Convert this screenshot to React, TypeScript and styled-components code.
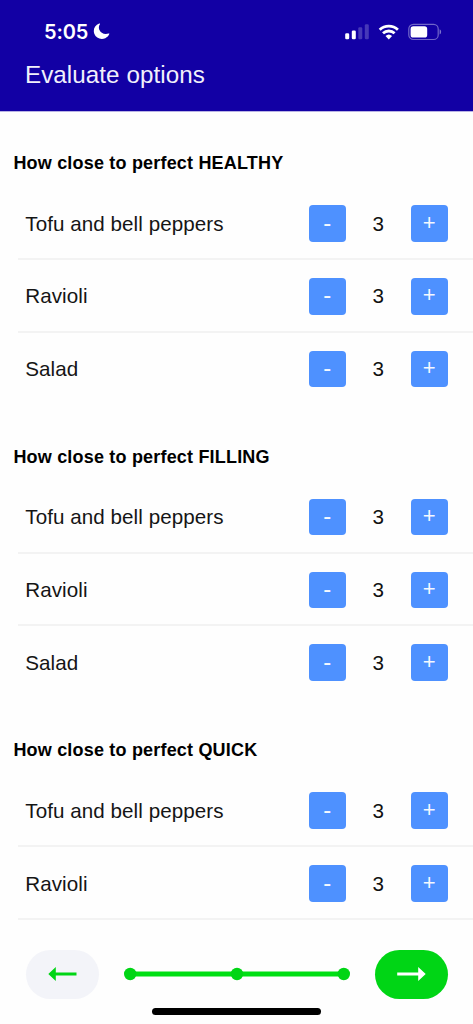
import React, { useState } from "react";
import styled, { createGlobalStyle } from "styled-components";

const GlobalStyle = createGlobalStyle`
  * { box-sizing: border-box; }
  body {
    margin: 0;
    overflow: hidden;
    background: #fff;
    font-family: "Liberation Sans", Arial, sans-serif;
  }
`;

const Screen = styled.div`
  display: flex;
  flex-direction: column;
  height: 1024px;
  background: #fefefe;
  overflow: hidden;
`;

const Header = styled.header`
  flex: none;
  height: 112px;
  background: #1200a4;
  border-bottom: 1px solid #b8b2e4;
  color: #fff;
`;

const StatusBar = styled.div`
  display: flex;
  align-items: center;
  justify-content: space-between;
  height: 57px;
  padding: 6px 31px 0 44px;
`;

const Clock = styled.div`
  display: flex;
  align-items: center;
  gap: 5px;
  font: 600 20px/24px Inter, sans-serif;
  letter-spacing: -0.1px;
`;

const Indicators = styled.div`
  display: flex;
  align-items: center;
  gap: 8px;
`;

const Title = styled.h1`
  margin: 4px 0 0 25px;
  font-size: 24.2px;
  line-height: 28px;
  font-weight: 400;
  letter-spacing: 0.06px;
  color: #f1f0fb;
`;

const Content = styled.main`
  flex: none;
  height: 808px;
  overflow: hidden;
`;

const SectionTitle = styled.h2`
  display: flex;
  align-items: flex-end;
  height: 75.2px;
  margin: 0;
  padding: 0 0 13.2px 13.4px;
  font-size: 18px;
  line-height: 22px;
  font-weight: 700;
  letter-spacing: 0.19px;
  color: #000;
`;

const Row = styled.div`
  display: flex;
  align-items: center;
  height: 72.8px;
  padding: 0 25.5px 0 25.3px;
`;

const Divider = styled.div<{ $visible: boolean }>`
  height: 2px;
  margin: -2px 0 0 18px;
  background: ${(p) => (p.$visible ? "#f3f3f3" : "transparent")};
`;

const OptionName = styled.span`
  flex: 1;
  font-size: 20.6px;
  line-height: 24px;
  letter-spacing: 0.06px;
  color: #151515;
`;

const StepButton = styled.button<{ $size?: number }>`
  display: flex;
  align-items: center;
  justify-content: center;
  width: 36.6px;
  height: 36.6px;
  padding: 0 0 2px;
  border: 0;
  border-radius: 4px;
  background: #4e91ff;
  color: #f4f8ff;
  font: 400 ${(p) => p.$size ?? 22}px/24px "Liberation Sans", Arial, sans-serif;
`;

const Score = styled.span`
  width: 65.4px;
  text-align: center;
  font-size: 20.6px;
  line-height: 24px;
  color: #111;
`;

const Footer = styled.footer`
  flex: none;
  display: flex;
  flex-direction: column;
  align-items: center;
  height: 104px;
  padding: 30px 25.5px 0;
`;

const Navigation = styled.nav`
  display: flex;
  align-items: center;
  justify-content: space-between;
  width: 100%;
`;

const PillButton = styled.button<{ $primary?: boolean }>`
  display: flex;
  align-items: center;
  justify-content: center;
  width: 73px;
  height: 48.6px;
  padding: 0;
  border: 0;
  border-radius: 25px;
  color: ${(p) => (p.$primary ? "#fff" : "#00d515")};
  background: ${(p) => (p.$primary ? "#00d515" : "#f3f4f9")};
`;

const HomeIndicator = styled.div`
  width: 169px;
  height: 7px;
  margin-top: 9.2px;
  border-radius: 4px;
  background: #000;
`;

const Moon = () => (
  <svg width="17" height="17" viewBox="0 0 17 17">
    <path d="M6.2.6C1.8 2.1-.2 6.8 1.3 10.8c1.6 4.4 6.7 6.4 11 4.4 1.9-.9 3.3-2.300 4-4.100.2-.5-.2-.8-.7-.6-4.200 1.300-8-.4-9.300-3.800C5.600 4.800 5.700 2.900 6.900 1.200c.3-.5-.1-.8-.7-.6Z" fill="currentColor" />
  </svg>
);

const Signal = () => (
  <svg width="25" height="16" viewBox="0 0 25 16" fill="#fff">
    <rect x="0.2" y="9.2" width="4" height="6" rx="1.3" />
    <rect x="6.8" y="6.4" width="4" height="8.8" rx="1.3" />
    <rect x="13.3" y="3.3" width="4" height="11.9" rx="1.3" opacity=".22" />
    <rect x="19.8" y="0.2" width="4" height="15" rx="1.3" opacity=".22" />
  </svg>
);

const Wifi = () => (
  <svg width="22" height="16" viewBox="0 0 22 16" fill="none" stroke="#fff" strokeWidth="2.8">
    <path d="M1.7 5.7a13.2 13.2 0 0 1 18.2 0" />
    <path d="M5 9.3a8.4 8.4 0 0 1 11.6 0" />
    <path d="M10.8 15.4 7.5 12a4.800 4.800 0 0 1 6.600 0Z" fill="#fff" stroke="none" />
  </svg>
);

const Battery = () => (
  <svg width="34" height="18" viewBox="0 0 34 18">
    <rect x="0.8" y="1.3" width="29.4" height="15.2" rx="4.6" fill="none" stroke="#fff" strokeWidth="1.2" opacity=".4" />
    <rect x="2.6" y="3.2" width="16.6" height="11.4" rx="2.7" fill="#fff" />
    <path d="M31.6 6.3c2 .8 2 4.4 0 5.200Z" fill="#fff" opacity=".45" />
  </svg>
);

const Arrow = ({ left = false }: { left?: boolean }) => (
  <svg width="29" height="14" viewBox="0 0 29 14" fill="currentColor">
    {left ? (
      <path d="M0.3 7 7.8 0v5.600h20.700v2.800H7.800V14Z" />
    ) : (
      <path d="M28.7 7 21.200 0v5.600H0.200v2.800h21V14Z" />
    )}
  </svg>
);

const Progress = () => (
  <svg width="228" height="14" viewBox="0 0 228 14" fill="#00d515">
    <path d="M7 4.600h214v4.900H7Z" fill="#00df13" />
    <circle cx="7.2" cy="7" r="6.2" />
    <circle cx="114" cy="7" r="6.2" />
    <circle cx="220.8" cy="7" r="6.2" />
  </svg>
);

const options = ["Tofu and bell peppers", "Ravioli", "Salad"];
const criteria = ["HEALTHY", "FILLING", "QUICK"];

function OptionRow({ name, last }: { name: string; last: boolean }) {
  const [score, setScore] = useState(3);
  return (
    <>
      <Row>
        <OptionName>{name}</OptionName>
        <StepButton $size={24} onClick={() => setScore(score - 1)}>-</StepButton>
        <Score>{score}</Score>
        <StepButton onClick={() => setScore(score + 1)}>+</StepButton>
      </Row>
      <Divider $visible={!last} />
    </>
  );
}

export default function App() {
  return (
    <Screen>
      <GlobalStyle />
      <Header>
        <StatusBar>
          <Clock>
            <span>5:05</span>
            <Moon />
          </Clock>
          <Indicators>
            <Signal />
            <Wifi />
            <Battery />
          </Indicators>
        </StatusBar>
        <Title>Evaluate options</Title>
      </Header>
      <Content>
        {criteria.map((criterion) => (
          <section key={criterion}>
            <SectionTitle>How close to perfect {criterion}</SectionTitle>
            {options
              .slice(0, criterion === "QUICK" ? 2 : 3)
              .map((name, i) => (
                <OptionRow key={name} name={name} last={i === 2} />
              ))}
          </section>
        ))}
      </Content>
      <Footer>
        <Navigation>
          <PillButton aria-label="Back">
            <Arrow left />
          </PillButton>
          <Progress />
          <PillButton $primary aria-label="Next">
            <Arrow />
          </PillButton>
        </Navigation>
        <HomeIndicator />
      </Footer>
    </Screen>
  );
}
